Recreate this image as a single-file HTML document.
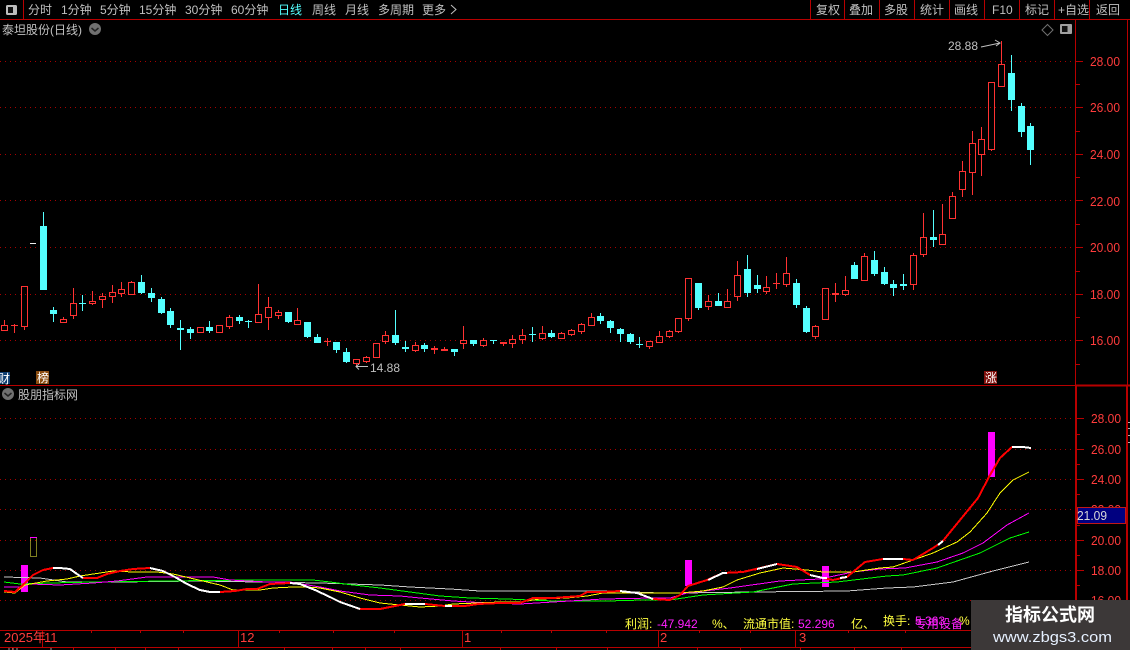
<!DOCTYPE html>
<html><head><meta charset="utf-8"><style>
html,body{margin:0;padding:0;background:#000;overflow:hidden}
svg{display:block}
text{font-family:"Liberation Sans","WenQuanYi Zen Hei","Noto Sans CJK SC",sans-serif;font-size:12px;fill:#c0c0c0}
.a text{fill:#ff3c3c;font-size:13px}
.y{fill:#ffff40}.m{fill:#ff20ff}
</style></head><body>
<svg width="1130" height="650" viewBox="0 0 1130 650" xmlns="http://www.w3.org/2000/svg">
<rect width="1130" height="650" fill="#000"/>
<!-- dotted grid -->
<path d="M0 61.5H1075M0 107.5H1075M0 154.5H1075M0 200.5H1075M0 247.5H1075M0 294.5H1075M0 340.5H1075M0 418.5H1075M0 449.5H1075M0 479.5H1075M0 509.5H1075M0 540.5H1075M0 570.5H1075M0 600.5H1075" stroke="#a80000" stroke-dasharray="1 4" fill="none" shape-rendering="crispEdges"/>
<!-- frame -->
<g stroke="#b80000" fill="none" shape-rendering="crispEdges">
<path d="M0 19.5H1130M23.5 0V19M810.5 0V19M844.5 0V19M879.5 0V19M914.5 0V19M949.5 0V19M984.5 0V19M1019.5 0V19M1054.5 0V19M1089.5 0V19"/>
<path d="M1075.5 19V385M0 385.5H1075M1127.5 19V385"/>
<path stroke-width="2" d="M1075 385.5H1130M1076 385V630M1127 385V650"/>
<path d="M0 630.5H971M0 647.5H971M42.5 630V647M238.5 630V647M462.5 630V647M658.5 630V647M795.5 630V647"/>
<path d="M91.5 630V633M140.5 630V633M183.5 630V633M279.5 630V633M333.5 630V633M394.5 630V633M501.5 630V633M551.5 630V633M606.5 630V633M699.5 630V633M750.5 630V633M848.5 630V633M905.5 630V633M12.5 647V650M73.5 647V650M115.5 647V650M145.5 647V650M178.5 647V650M284.5 647V650M332.5 647V650M365.5 647V650M400.5 647V650M500.5 647V650M556.5 647V650M607.5 647V650M697.5 647V650M740.5 647V650M800.5 647V650M854.5 647V650M901.5 647V650"/>
<path d="M1076 61.5h7M1076 107.5h7M1076 154.5h7M1076 200.5h7M1076 247.5h7M1076 294.5h7M1076 340.5h7M1076 84.5h4M1076 131.5h4M1076 177.5h4M1076 224.5h4M1076 271.5h4M1076 317.5h4M1076 364.5h4M1077 418.5h7M1077 449.5h7M1077 479.5h7M1077 509.5h7M1077 540.5h7M1077 570.5h7M1077 434.5h3M1077 464.5h3M1077 494.5h3M1077 525.5h3M1077 555.5h3M1077 585.5h3"/>
</g>
<path d="M1128 422.5h2M1128 428.5h2M1128 435.5h2M1128 442.5h2" stroke="#b0b0b0" shape-rendering="crispEdges"/>
<!-- top bar -->
<rect x="6" y="5" width="11" height="10" rx="1.5" fill="#bdbdbd"/><rect x="8" y="7" width="5" height="6" fill="#111"/>
<text x="28" y="14">分时</text><text x="61" y="14">1分钟</text><text x="100" y="14">5分钟</text><text x="139" y="14">15分钟</text><text x="185" y="14">30分钟</text><text x="231" y="14">60分钟</text><text x="278" y="14" style="fill:#54ffff">日线</text><text x="312" y="14">周线</text><text x="345" y="14">月线</text><text x="378" y="14">多周期</text><text x="422" y="14">更多</text>
<path d="M451 5l5 4.500-5 4.500" stroke="#c0c0c0" fill="none"/>
<text x="816" y="14">复权</text><text x="849" y="14">叠加</text><text x="884" y="14">多股</text><text x="920" y="14">统计</text><text x="954" y="14">画线</text><text x="992" y="14">F10</text><text x="1025" y="14">标记</text><text x="1058" y="14">+自选</text><text x="1096" y="14">返回</text>
<text x="2" y="34">泰坦股份(日线)</text>
<circle cx="95" cy="29" r="6" fill="#707070"/><path d="M91.500 28l3.500 3 3.500-3" stroke="#222" stroke-width="1.500" fill="none"/>
<path d="M1047.500 24.500l5.500 5.500-5.500 5.500-5.500-5.500z" stroke="#707070" fill="none"/>
<rect x="1060" y="24" width="12" height="10" rx="1" fill="#a0a0a0"/><rect x="1062" y="26" width="5.500" height="6" fill="#111"/>
<!-- red candles -->
<path shape-rendering="crispEdges" stroke="#ff3232" fill="none" d="
M4.500 320V325M1.500 325.500h6v5h-6z
M14.500 324V333M11 325.500h7
M21.500 286.500h6v40h-6zM24.500 327V330
M63.500 317V319M60.500 319.500h6v3h-6z
M73.500 288V303M70.500 303.500h6v12h-6zM73.500 316V319
M92.500 291V301M89.500 301.500h6v2h-6zM92.500 304V305
M102.500 293V296M99.500 296.500h6v3h-6zM102.500 300V308
M112.500 285V292M109.500 292.500h6v4h-6zM112.500 297V303
M121.500 282V289M118.500 289.500h6v4h-6zM121.500 294V297
M131.500 281V282M128.500 282.500h6v12h-6z
M197.500 327.500h6v5h-6z
M216.500 325.500h6v7h-6z
M229.500 315V317M226.500 317.500h6v9h-6zM229.500 327V329
M258.500 284V314M255.500 314.500h6v8h-6z
M268.500 297V307M265.500 307.500h6v10h-6zM268.500 318V330
M278.500 310V312M275.500 312.500h6v3h-6zM278.500 316V319
M297.500 308V320M294.500 320.500h6v4h-6z
M327.500 338V346M324 341.500h7
M353.500 359.500h6v4h-6zM356.500 364V366
M366.500 356V357M363.500 357.500h6v4h-6zM366.500 362V363
M373.500 343.500h6v14h-6z
M385.500 331V335M382.500 335.500h6v6h-6zM385.500 342V344
M415.500 342V345M412.500 345.500h6v5h-6zM415.500 351V352
M434.500 346V354M431 348.500h7M431 349.500h7
M444.500 347V349M441 349.500h7M441 350.500h7
M463.500 326V340M460.500 340.500h6v3h-6zM463.500 344V349
M483.500 338V340M480.500 340.500h6v5h-6zM483.500 346V347
M503.500 342V346M500 342.500h7M500 343.500h7
M512.500 335V339M509.500 339.500h6v4h-6zM512.500 344V348
M522.500 329V335M519.500 335.500h6v4h-6zM522.500 340V344
M542.500 326V333M539.500 333.500h6v5h-6zM542.500 339V340
M561.500 332V333M558.500 333.500h6v5h-6z
M571.500 329V330M568.500 330.500h6v4h-6zM571.500 335V336
M581.500 323V324M578.500 324.500h6v7h-6zM581.500 332V334
M591.500 313V317M588.500 317.500h6v8h-6z
M646.500 341.500h6v5h-6zM649.500 347V349
M659.500 331V336M656.500 336.500h6v6h-6z
M669.500 330V331M666.500 331.500h6v5h-6zM669.500 337V338
M675.500 318.500h6v13h-6zM678.500 332V333
M685.500 278.500h6v40h-6zM688.500 319V321
M708.500 295V301M705.500 301.500h6v5h-6zM708.500 307V310
M727.500 289V301M724.500 301.500h6v6h-6z
M737.500 261V275M734.500 275.500h6v21h-6zM737.500 297V301
M766.500 276V287M763.500 287.500h6v4h-6zM766.500 292V294
M776.500 273V289M773 283.500h7
M786.500 257V273M783.500 273.500h6v11h-6zM786.500 285V287
M815.500 325V326M812.500 326.500h6v10h-6zM815.500 337V339
M822.500 288.500h6v31h-6z
M835.500 283V302M832 293.500h7M832 294.500h7
M845.500 276V290M842.500 290.500h6v4h-6zM845.500 295V296
M864.500 253V256M861.500 256.500h6v24h-6z
M913.500 253V255M910.500 255.500h6v29h-6zM913.500 285V290
M923.500 213V237M920.500 237.500h6v17h-6zM923.500 255V257
M942.500 204V234M939.500 234.500h6v10h-6z
M952.500 192V196M949.500 196.500h6v22h-6z
M962.500 161V171M959.500 171.500h6v18h-6zM962.500 190V197
M972.500 131V143M969.500 143.500h6v29h-6zM972.500 173V195
M981.500 127V139M978.500 139.500h6v15h-6zM981.500 155V176
M988.500 82.500h6v67h-6zM991.500 150V151
M1001.500 41V64M998.500 64.500h6v22h-6z"/>
<!-- cyan candles -->
<path shape-rendering="crispEdges" stroke="#54ffff" fill="none" d="M43.500 212V226M53.500 307V322M82.500 295V311M79 303.500h7M141.500 275V294M151.500 288V302M161.500 297V314M170.500 308V328M180.500 320V350M190.500 327V339M209.500 321V333M239.500 315V324M248.500 320V328M245 321.500h7M288.500 312V323M307.500 322V338M317.500 334V343M336.500 342V353M346.500 348V363M395.500 310V345M405.500 341V352M424.500 343V352M454.500 349V356M473.500 340V346M493.500 340V344M532.500 327V342M529 334.500h7M551.500 330V338M600.500 313V324M610.500 320V333M620.500 328V342M630.500 333V344M639.500 337V348M636 344.500h7M698.500 283V310M718.500 293V306M747.500 255V297M757.500 275V293M796.500 279V308M806.500 306V333M854.500 262V279M874.500 251V276M884.500 267V285M893.500 280V296M903.500 274V290M933.500 210V247M1011.500 55V111M1021.500 103V137M1030.500 123V165"/>
<path fill="#54ffff" d="M40 226h7v64h-7zM50 310h7v4h-7zM138 282h7v11h-7zM148 293h7v5h-7zM158 299h7v14h-7zM167 311h7v14h-7zM177 328h7v2h-7zM187 329h7v4h-7zM206 327h7v4h-7zM236 317h7v4h-7zM285 312h7v10h-7zM304 322h7v15h-7zM314 337h7v6h-7zM333 342h7v8h-7zM343 352h7v10h-7zM392 335h7v8h-7zM402 347h7v2h-7zM421 345h7v4h-7zM451 349h7v3h-7zM470 340h7v4h-7zM490 340h7v1h-7zM548 333h7v4h-7zM597 316h7v5h-7zM607 321h7v7h-7zM617 329h7v5h-7zM627 334h7v8h-7zM695 283h7v25h-7zM715 301h7v5h-7zM744 269h7v24h-7zM754 285h7v4h-7zM793 283h7v22h-7zM803 308h7v24h-7zM851 265h7v14h-7zM871 260h7v14h-7zM881 272h7v12h-7zM890 284h7v4h-7zM900 284h7v2h-7zM930 237h7v3h-7zM1008 73h7v27h-7zM1018 106h7v26h-7zM1027 126h7v24h-7z"/>
<rect x="30" y="243" width="6" height="1" fill="#eee"/>
<text x="948" y="50">28.88</text>
<path d="M981 47l19-4M995 40l5 3-4 3" stroke="#c0c0c0" fill="none"/>
<text x="370" y="372">14.88</text>
<path d="M356 366.500h12M359 364l-3 2.500 3 3" stroke="#c0c0c0" fill="none"/>
<rect x="0" y="372" width="10" height="12" fill="#0e3d70"/><text x="-2" y="383" style="fill:#fff">财</text>
<rect x="36" y="371" width="13" height="13" fill="#8a4c10"/><text x="37" y="382" style="fill:#fff">榜</text>
<rect x="984" y="371" width="13" height="13" fill="#80100c"/><text x="985" y="382" style="fill:#fff">涨</text>
<!-- axis labels -->
<g class="a">
<text x="1090" y="66" textLength="30" lengthAdjust="spacingAndGlyphs">28.00</text><text x="1090" y="112" textLength="30" lengthAdjust="spacingAndGlyphs">26.00</text><text x="1090" y="159" textLength="30" lengthAdjust="spacingAndGlyphs">24.00</text><text x="1090" y="206" textLength="30" lengthAdjust="spacingAndGlyphs">22.00</text><text x="1090" y="252" textLength="30" lengthAdjust="spacingAndGlyphs">20.00</text><text x="1090" y="299" textLength="30" lengthAdjust="spacingAndGlyphs">18.00</text><text x="1090" y="345" textLength="30" lengthAdjust="spacingAndGlyphs">16.00</text>
<text x="1091" y="423" textLength="30" lengthAdjust="spacingAndGlyphs">28.00</text><text x="1091" y="454" textLength="30" lengthAdjust="spacingAndGlyphs">26.00</text><text x="1091" y="484" textLength="30" lengthAdjust="spacingAndGlyphs">24.00</text><text x="1091" y="514" textLength="30" lengthAdjust="spacingAndGlyphs">22.00</text><text x="1091" y="545" textLength="30" lengthAdjust="spacingAndGlyphs">20.00</text><text x="1091" y="575" textLength="30" lengthAdjust="spacingAndGlyphs">18.00</text><text x="1091" y="605" textLength="30" lengthAdjust="spacingAndGlyphs">16.00</text>
</g>
<rect x="1077.500" y="507.500" width="48" height="16" fill="#000080" stroke="#c01818" shape-rendering="crispEdges"/>
<text x="1077" y="520" textLength="30" lengthAdjust="spacingAndGlyphs" style="font-size:13px;fill:#d8d8d8">21.09</text>
<!-- lower panel label -->
<circle cx="8" cy="394" r="6" fill="#707070"/><path d="M4.500 393l3.500 3 3.500-3" stroke="#222" stroke-width="1.500" fill="none"/>
<text x="18" y="399">股朋指标网</text>
<!-- magenta bars -->
<path fill="#ff00ff" d="M21 565h7v27h-7zM685 560h7v26h-7zM822 566h7v21h-7zM988 432h7v45h-7z"/>
<rect x="30.500" y="537.500" width="6" height="19" fill="none" stroke="#ffff40" stroke-dasharray="1 1" shape-rendering="crispEdges"/>
<path d="M30 537.500h7" stroke="#ff00ff" shape-rendering="crispEdges"/>
<!-- lines -->
<g fill="none" shape-rendering="crispEdges">
<polyline stroke="#c8c8c8" points="4,577 40,578 67,582 117,582 200,581 320,583 380,585 410,587 450,589 480,591 607,591 660,593 680,593 753,592 847,591 887,588 913,587 953,582 993,571 1029,562"/>
<polyline stroke="#00ff00" points="4,582 20,584 50,583 93,582 167,581 253,580 313,580 330,582 353,585 380,588 410,592 440,596 470,598 507,599 553,601 607,601 643,600 670,600 703,595 753,592 793,584 837,582 887,576 903,575 937,568 980,553 1010,538 1029,532"/>
<polyline stroke="#ff00ff" points="4,587 20,587 30,584 60,585 93,583 117,581 147,577 213,577 230,580 267,582 290,582 320,587 340,591 370,595 400,596 420,598 453,601 487,603 520,604 553,602 603,599 653,598 670,598 687,593 730,588 780,581 820,579 853,572 880,569 905,568 937,562 963,553 983,543 1007,525 1029,513"/>
<polyline stroke="#ffff00" points="4,592 15,593 25,585 47,581 67,579 80,576 100,573 113,571 133,572 157,572 173,574 190,578 207,582 220,585 233,590 260,590 273,588 293,587 307,587 320,588 340,592 360,598 380,603 400,605 420,607 440,606 453,604 477,603 500,602 520,602 540,599 567,598 587,596 603,593 627,593 663,593 680,593 703,591 723,587 737,580 760,573 783,568 807,570 823,572 853,572 880,568 893,567 913,560 933,553 957,542 970,532 987,513 1000,493 1013,480 1029,472"/>
<polyline stroke="#ff0000" stroke-width="2" points="4,591 15,592 25,583 33,575 43,570 53,568 60,568 70,569 77,574 83,578 97,578 107,574 120,571 133,569 150,568 163,571 175,577 187,584 200,590 210,592 220,592 235,591 247,589 257,589 270,584 290,583 300,584 315,590 330,597 340,602 360,609 380,609 395,606 405,604 425,604 445,606 465,606 478,604 500,603 520,603 533,598 553,598 580,596 587,592 603,592 620,591 637,593 653,599 670,600 680,595 688,586 707,580 723,573 743,572 760,568 777,564 797,567 810,575 823,578 833,580 847,577 865,562 883,559 903,559 913,560 933,548 942,542 960,520 978,498 990,475 1000,458 1012,447 1023,447 1031,448"/>
<g stroke="#fff" stroke-width="2">
<polyline points="53,568 60,568 70,569 77,574 83,578"/>
<polyline points="150,568 163,571 175,577 187,584 200,590 210,592 220,592"/>
<polyline points="290,583 300,584 315,590 330,597 340,602 360,609"/>
<polyline points="405,604 425,604"/>
<polyline points="445,606 452,606"/>
<polyline points="620,591 637,593 653,599"/>
<polyline points="708,580 723,573 727,573"/>
<polyline points="757,569 777,564"/>
<polyline points="810,575 823,578 827,578"/>
<polyline points="840,578 847,577"/>
<polyline points="883,559 903,559"/>
<polyline points="938,545 943,541"/>
<polyline points="1012,447 1023,447 1031,448"/>
</g>
</g>
<!-- bottom info -->
<text x="625" y="628" class="y">利润:</text><text x="657" y="628" class="m">-47.942</text><text x="712" y="628" class="y">%、</text><text x="743" y="628" class="y">流通市值:</text><text x="798" y="628" class="m">52.296</text><text x="851" y="628" class="y">亿、</text><text x="883" y="625" class="y">换手:</text><text x="915" y="625" class="m">5.363</text><text x="915" y="628" class="m">专用设备</text><text x="959" y="625" class="y">%</text>
<g><text x="4" y="642" style="fill:#ff3c3c;font-size:13px">2025年</text><text x="44" y="642" style="fill:#ff3c3c;font-size:13px">11</text><text x="240" y="642" style="fill:#ff3c3c;font-size:13px">12</text><text x="464" y="642" style="fill:#ff3c3c;font-size:13px">1</text><text x="660" y="642" style="fill:#ff3c3c;font-size:13px">2</text><text x="799" y="642" style="fill:#ff3c3c;font-size:13px">3</text></g>
<path d="M8 649h12M50 649h3" stroke="#a0a0a0" stroke-dasharray="2 2" shape-rendering="crispEdges"/>
<!-- watermark -->
<rect x="971" y="600" width="159" height="50" fill="#3c3838"/>
<text x="1005" y="621" style="font-size:18px;font-weight:bold;fill:#fff;font-family:'Liberation Sans','Noto Sans CJK SC',sans-serif">指标公式网</text>
<text x="993" y="642" textLength="119" lengthAdjust="spacingAndGlyphs" style="font-size:15px;fill:#e6f0ff">www.zbgs3.com</text>
</svg>
</body></html>
